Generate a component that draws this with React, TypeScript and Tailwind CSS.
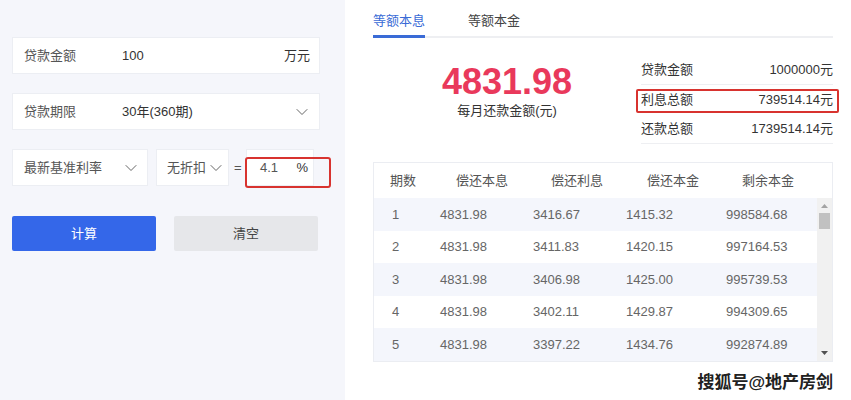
import { ChevronDown } from 'lucide-react';

const rows = [
  ['1', '4831.98', '3416.67', '1415.32', '998584.68'],
  ['2', '4831.98', '3411.83', '1420.15', '997164.53'],
  ['3', '4831.98', '3406.98', '1425.00', '995739.53'],
  ['4', '4831.98', '3402.11', '1429.87', '994309.65'],
  ['5', '4831.98', '3397.22', '1434.76', '992874.89'],
];

const font = { fontFamily: '"Liberation Sans", "Noto Sans CJK SC", sans-serif' };

export default function App() {
  return (
    <main className="flex h-[400px] w-[851px] overflow-hidden bg-white text-[13px] text-[#333]" style={font}>
      {/* Left: form */}
      <section className="flex w-[345px] shrink-0 flex-col bg-[#f5f6fb] pl-3 pt-[37px]">
        <div className="flex h-[37px] w-[308px] items-center border border-[#eceef3] bg-white pl-[11px] pr-[9px]">
          <span className="w-[98px] text-[#555]">贷款金额</span>
          <span className="flex-1">100</span>
          <span>万元</span>
        </div>

        <div className="mt-[19px] flex h-[37px] w-[308px] items-center border border-[#eceef3] bg-white pl-[11px] pr-[7px]">
          <span className="w-[98px] text-[#555]">贷款期限</span>
          <span className="flex-1">30年(360期)</span>
          <ChevronDown size={20} strokeWidth={1.2} className="text-[#666]" />
        </div>

        <div className="relative mt-[19px] flex h-[37px] items-center">
          <div className="flex h-full w-[136px] items-center justify-between border border-[#eceef3] bg-white pl-[11px] pr-[6px]">
            <span className="text-[#555]">最新基准利率</span>
            <ChevronDown size={20} strokeWidth={1.2} className="text-[#666]" />
          </div>
          <div className="ml-2 flex h-full w-[73px] items-center border border-[#eceef3] bg-white pl-[10px]">
            <span className="text-[#555]">无折扣</span>
            <ChevronDown size={20} strokeWidth={1.2} className="text-[#666]" />
          </div>
          <span className="ml-[5px] w-[12px] text-[#555]">=</span>
          <div className="flex h-full w-[68px] items-center justify-between border border-[#eceef3] bg-white pl-[13px] pr-[5px]">
            <span className="text-[#555]">4.1</span>
            <span>%</span>
          </div>
          <div className="pointer-events-none absolute left-[233px] top-[8px] h-[31px] w-[86px] rounded-[3px] border-[2.5px] border-[#d8332f]" />
        </div>

        <div className="mt-[30px] flex gap-[18px]">
          <button className="h-[35px] w-[144px] rounded-[2px] bg-[#3467e9] text-white">计算</button>
          <button className="h-[35px] w-[144px] rounded-[2px] bg-[#e6e7ea] text-[#444]">清空</button>
        </div>
      </section>

      {/* Right: results */}
      <section className="flex flex-1 flex-col pl-[28px] pr-[18px]">
        <div className="flex h-[38px] items-end gap-[43px] border-b-2 border-[#eeeff2]">
          <div className="-mb-[2px] border-b-[3px] border-[#3a6bd6] pb-[5px] text-[#3a6bd6]">等额本息</div>
          <div className="pb-[6px] text-[#444]">等额本金</div>
        </div>

        <div className="flex h-[109px]">
          <div className="flex w-[268px] flex-col items-center pt-[23px]">
            <div className="text-[36px] font-bold leading-[42px] text-[#e9395b]">4831.98</div>
            <div className="-mt-[2px] text-[#333]">每月还款金额(元)</div>
          </div>
          <div className="flex flex-1 flex-col pt-[17px]">
            <div className="flex h-[30px] items-center justify-between border-b border-[#eeeff2]">
              <span>贷款金额</span>
              <span>1000000元</span>
            </div>
            <div className="relative flex h-[30px] items-center justify-between">
              <span>利息总额</span>
              <span>739514.14元</span>
              <div className="pointer-events-none absolute -left-[5px] -right-[6px] top-[4px] h-[24px] rounded-[2px] border-2 border-[#d8332f]" />
            </div>
            <div className="flex h-[29px] items-center justify-between border-b border-[#eeeff2]">
              <span>还款总额</span>
              <span>1739514.14元</span>
            </div>
          </div>
        </div>

        <div className="mt-[15px] flex flex-col border border-[#ebedf2]">
          <div className="grid h-[35px] grid-cols-[66px_95px_96px_95px_1fr] items-center pl-[16px] text-[#555]">
            <span>期数</span>
            <span>偿还本息</span>
            <span>偿还利息</span>
            <span>偿还本金</span>
            <span>剩余本金</span>
          </div>
          <div className="flex">
            <div className="flex flex-1 flex-col">
              {rows.map((r, i) => (
                <div
                  key={r[0]}
                  className={`grid h-[32.6px] grid-cols-[48px_93px_93px_100px_1fr] items-center pl-[18px] text-[#666] ${
                    i % 2 === 0 ? 'bg-[#f4f6fc]' : 'bg-white'
                  }`}
                >
                  {r.map((c, j) => (
                    <span key={j}>{c}</span>
                  ))}
                </div>
              ))}
            </div>
            <div className="flex w-[15px] flex-col items-center bg-[#f1f1f1]">
              <svg width="7" height="4" viewBox="0 0 7 4" className="mt-[6px]">
                <path d="M3.5 0 L7 4 L0 4 Z" fill="#a3a3a3" />
              </svg>
              <div className="mt-[5px] h-[16px] w-[11px] bg-[#c1c1c1]" />
              <div className="flex-1" />
              <svg width="7" height="4" viewBox="0 0 7 4" className="mb-[6px]">
                <path d="M0 0 L7 0 L3.5 4 Z" fill="#505050" />
              </svg>
            </div>
          </div>
        </div>

        <div className="mt-[8px] text-right text-[17px] font-bold text-[#222]">搜狐号@地产房剑</div>
      </section>
    </main>
  );
}
